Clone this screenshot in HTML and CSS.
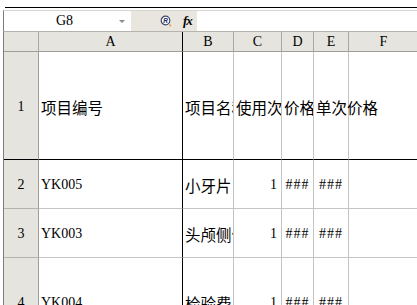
FILE: index.html
```html
<!DOCTYPE html>
<html lang="zh-CN">
<head>
    <meta charset="UTF-8">
    <meta name="viewport" content="width=device-width, initial-scale=1.0">
    <title>Sheet1</title>
    <link rel="stylesheet" href="styles.css">
</head>
<body>
    <div class="top-edge"></div>
    <div class="formula-bar">
        <div class="name-box">
            <span class="cell-name">G8</span>
            <span class="drop"></span>
        </div>
        <div class="fx-zone">
            <svg class="wizard" width="12" height="12" viewBox="0 0 12 12">
                <circle cx="5.5" cy="5.5" r="4.3" fill="#fff" stroke="#3c4a70" stroke-width="1.2"/>
                <text x="5.6" y="8" font-size="6.5" font-family="Liberation Sans, sans-serif" font-weight="bold" font-style="italic" text-anchor="middle" fill="#1d2a55">R</text>
                <circle cx="10.2" cy="10.4" r="1.1" fill="#e8a050"/>
            </svg>
            <span class="fx">fx</span>
        </div>
        <div class="formula-input"></div>
    </div>

    <div class="sheet">
        <div class="corner"></div>
        <div class="col-head freeze-col">A</div>
        <div class="col-head">B</div>
        <div class="col-head">C</div>
        <div class="col-head">D</div>
        <div class="col-head">E</div>
        <div class="col-head">F</div>

        <div class="row-head freeze-row">1</div>
        <div class="cell zh freeze-row freeze-col">项目编号</div>
        <div class="cell zh freeze-row">项目名称</div>
        <div class="cell zh freeze-row">使用次数</div>
        <div class="cell zh freeze-row">价格</div>
        <div class="cell zh freeze-row spill">单次价格</div>
        <div class="cell freeze-row"></div>

        <div class="row-head">2</div>
        <div class="cell latin freeze-col">YK005</div>
        <div class="cell zh">小牙片</div>
        <div class="cell latin num">1</div>
        <div class="cell latin hash">###</div>
        <div class="cell latin hash">###</div>
        <div class="cell"></div>

        <div class="row-head">3</div>
        <div class="cell latin freeze-col">YK003</div>
        <div class="cell zh">头颅侧位片</div>
        <div class="cell latin num">1</div>
        <div class="cell latin hash">###</div>
        <div class="cell latin hash">###</div>
        <div class="cell"></div>

        <div class="row-head">4</div>
        <div class="cell latin freeze-col">YK004</div>
        <div class="cell zh">检验费</div>
        <div class="cell latin num">1</div>
        <div class="cell latin hash">###</div>
        <div class="cell latin hash">###</div>
        <div class="cell"></div>
    </div>
</body>
</html>
```

FILE: styles.css
```css
html, body {
    margin: 0;
    padding: 0;
    background-color: #fff;
    overflow: hidden;
}

body {
    font-family: "Liberation Serif", "Noto Sans CJK SC", serif;
    color: #000;
    height: 305px;
}

.top-edge {
    height: 7px;
    border-bottom: 1px solid #000;
    margin-left: 5px;
}

.formula-bar {
    display: flex;
    height: 20px;
    margin-top: 2px;
    margin-left: 3px;
    border-top: 1px solid #d6d5cf;
    border-left: 1px solid #7d7d7d;
}

.name-box {
    width: 127px;
    display: flex;
    align-items: center;
    background-color: #fff;
}

.cell-name {
    flex: 1;
    text-align: center;
    font-size: 14px;
    padding-left: 6px;
}

.drop {
    width: 0;
    height: 0;
    border-left: 3px solid transparent;
    border-right: 3px solid transparent;
    border-top: 3px solid #8a8a8a;
    margin-right: 6px;
}

.fx-zone {
    width: 66px;
    display: flex;
    align-items: center;
    background-color: #e8e6de;
}

.wizard {
    margin-left: 29px;
}

.fx {
    margin-left: 11px;
    font-style: italic;
    font-weight: bold;
    font-size: 13px;
    letter-spacing: -1px;
}

.formula-input {
    flex: 1;
    background-color: #fff;
}

.sheet {
    display: grid;
    grid-template-columns: 35px 144px 51px 48px 32px 35px 70px;
    grid-template-rows: 20px 108px 49px 49px 88px;
    margin-left: 3px;
    border-left: 1px solid #7d7d7d;
    border-top: 1px solid #b4b3ad;
}

.sheet > div {
    box-sizing: border-box;
    border-right: 1px solid #c4c4c4;
    border-bottom: 1px solid #c4c4c4;
    overflow: hidden;
    white-space: nowrap;
}

.corner,
.col-head,
.row-head {
    background-color: #e5e4de;
}

.sheet > .corner,
.sheet > .col-head {
    border-right-color: #a9a8a2;
    border-bottom-color: #9f9e98;
}

.sheet > .row-head {
    border-right-color: #9f9e98;
    border-bottom-color: #b4b3ad;
}

.col-head {
    display: flex;
    align-items: center;
    justify-content: center;
    font-size: 14px;
    padding-top: 1px;
}

.row-head {
    display: flex;
    align-items: center;
    justify-content: center;
    font-size: 14px;
    padding-top: 2px;
}

.cell {
    display: flex;
    align-items: center;
    padding: 2px 2px 0 2px;
}

.zh {
    font-size: 15.5px;
    font-family: "Noto Sans CJK SC", sans-serif;
}

.latin {
    font-size: 14px;
}

.num {
    justify-content: flex-end;
    padding-right: 4px;
}

.hash {
    justify-content: center;
    letter-spacing: 1px;
}

.sheet > .spill {
    overflow: visible;
    position: relative;
    z-index: 1;
}

.sheet > .freeze-col {
    border-right-color: #000;
}

.sheet > .freeze-row {
    border-bottom-color: #000;
}
```
